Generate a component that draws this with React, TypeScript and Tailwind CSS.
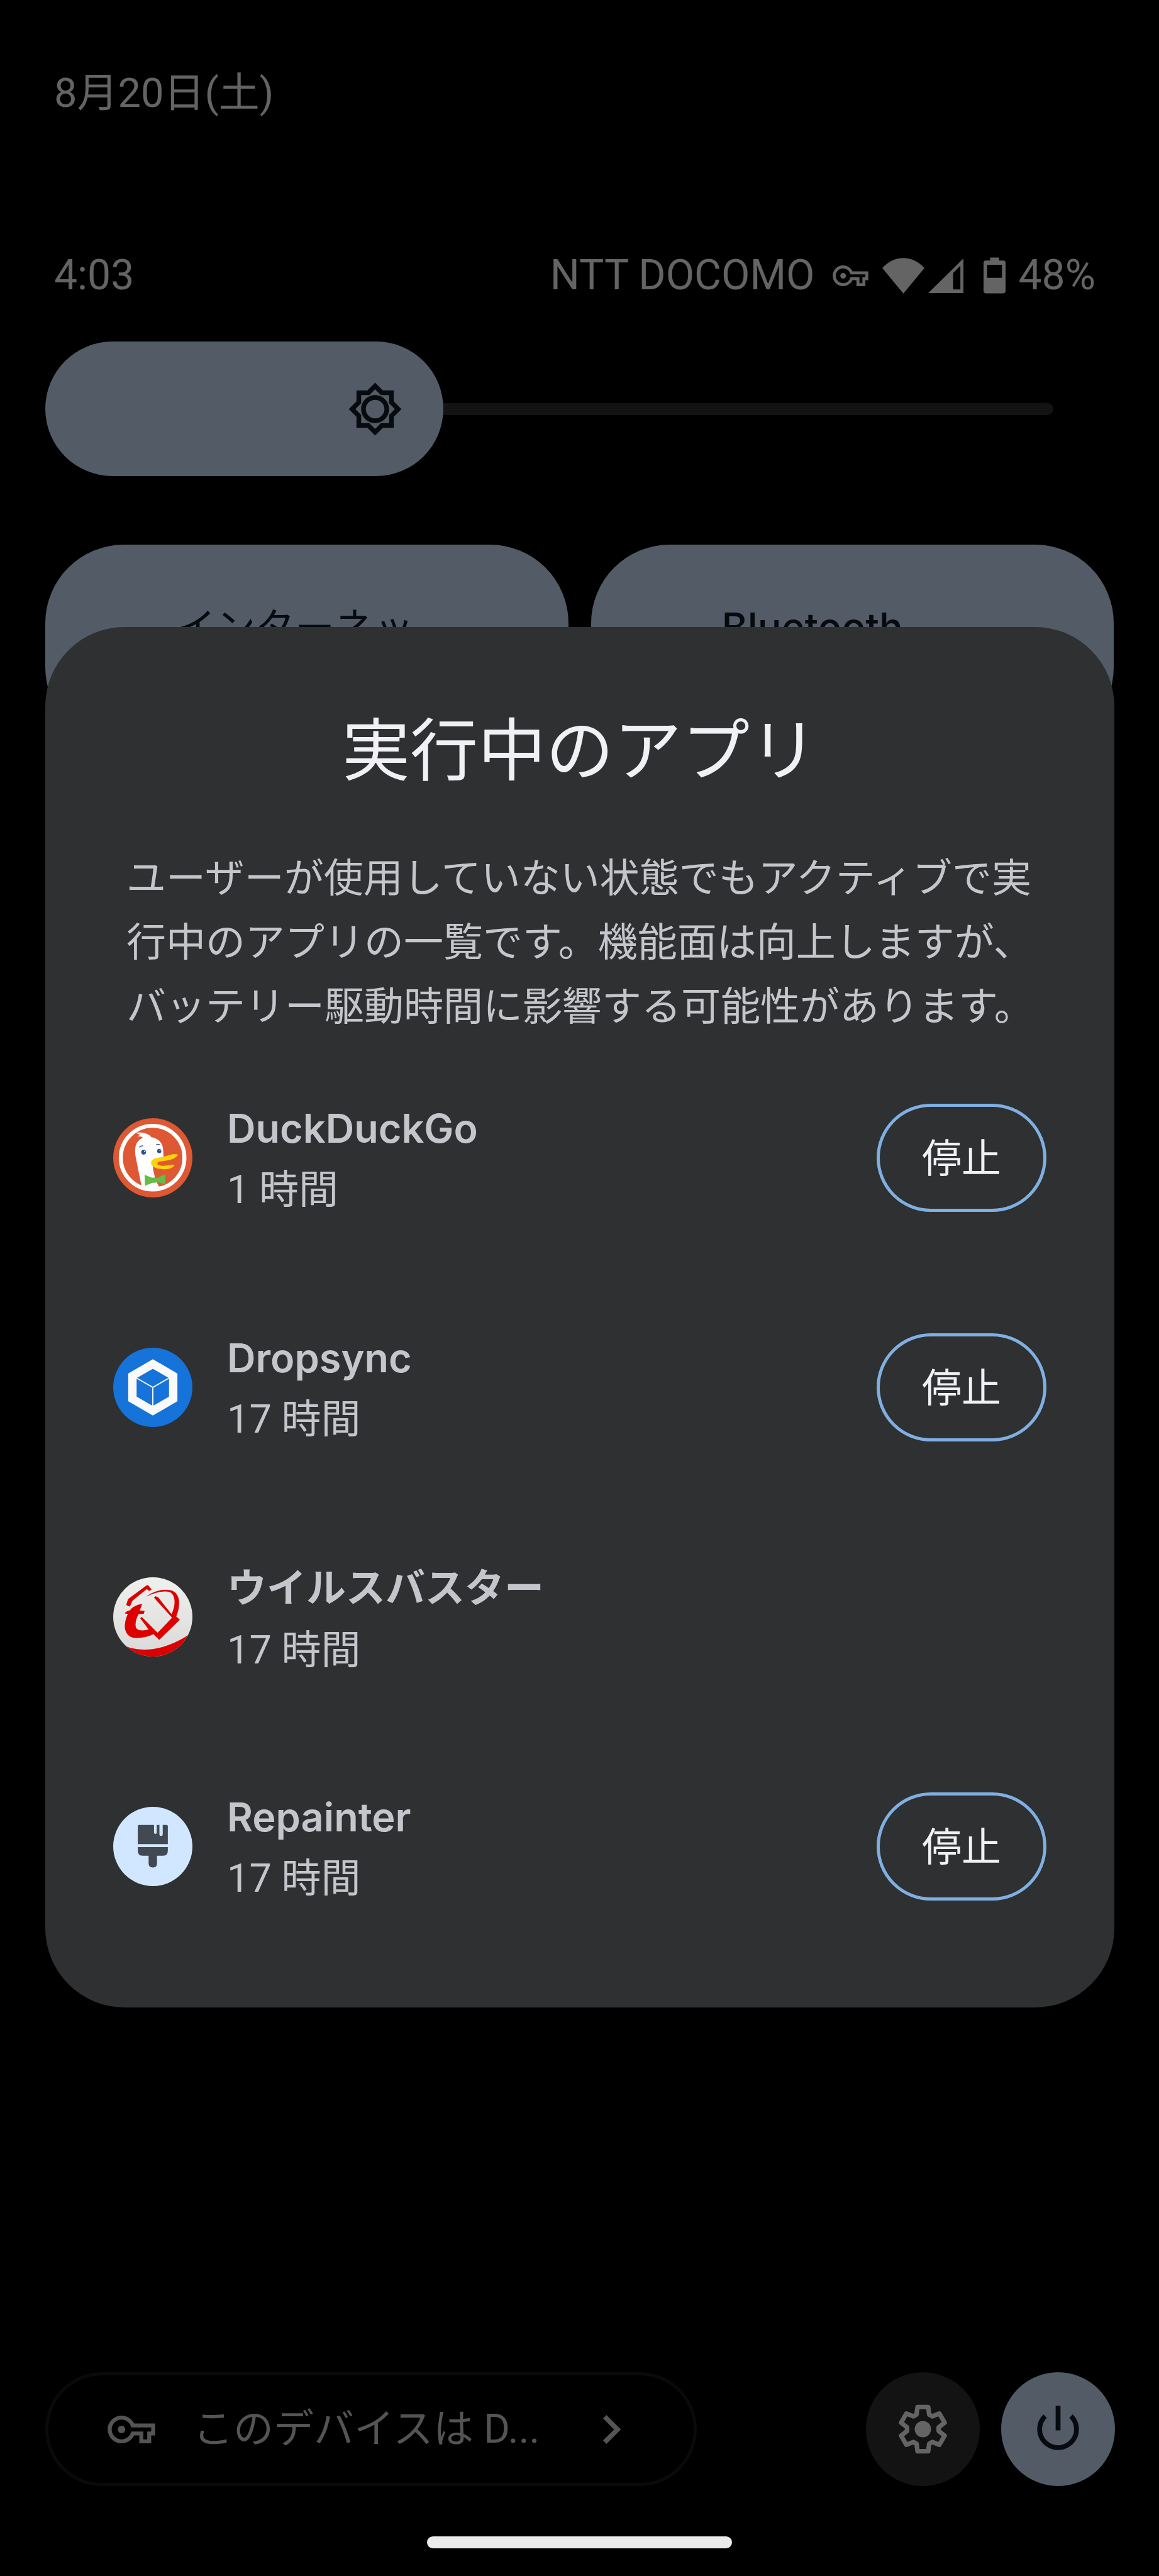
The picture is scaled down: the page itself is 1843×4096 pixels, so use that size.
import { useState } from "react";
import type { ReactNode } from "react";
import { MdChevronRight, MdOutlineBrightnessLow } from "react-icons/md";

function KeyIcon({ className }: { className: string }) {
  return (
    <svg viewBox="0 5 24 14" fill="currentColor" className={className} aria-hidden="true">
      <path d="M22 19h-6v-4h-2.68c-1.14 2.42-3.6 4-6.32 4-3.86 0-7-3.14-7-7s3.14-7 7-7c2.72 0 5.17 1.58 6.32 4H24v6h-2v4zm-4-2h2v-4h2v-2H11.94l-.23-.67C11.01 8.34 9.11 7 7 7c-2.76 0-5 2.24-5 5s2.24 5 5 5c2.11 0 4.01-1.34 4.71-3.33l.23-.67H18v4z" />
      <circle cx="7" cy="12" r="1.9" />
    </svg>
  );
}

function WifiIcon() {
  return (
    <svg viewBox="0 0 70 59" fill="currentColor" className="h-[57px] w-[67px]" aria-hidden="true">
      <path d="M0 16.6 C20 -5.5 50 -5.5 70 16.6 L35 59 Z" />
    </svg>
  );
}

function SignalIcon() {
  return (
    <svg viewBox="0 0 58 57" fill="currentColor" className="h-[55px] w-[56px]" aria-hidden="true">
      <path fillRule="evenodd" d="M58 0 V57 H0 Z M53 12 L41 24 V51 H53 Z" />
    </svg>
  );
}

function BatteryIcon() {
  return (
    <svg viewBox="0 0 37 60" fill="currentColor" className="h-[58px] w-[35px]" aria-hidden="true">
      <path
        fillRule="evenodd"
        d="M11 0 H26 V5 H33 Q37 5 37 9 V56 Q37 60 33 60 H4 Q0 60 0 56 V9 Q0 5 4 5 H11 Z M6 12 V34 H31 V12 Z"
      />
    </svg>
  );
}

const gearPoints = [0, 60, 120, 180, 240, 300]
  .flatMap((base) =>
    [
      [-13.5, 37.5],
      [13.5, 37.5],
      [23.5, 26.2],
      [36.5, 26.2],
    ].map(([offset, radius]) => {
      const angle = ((base + offset) * Math.PI) / 180;
      return `${(radius * Math.sin(angle)).toFixed(2)},${(-radius * Math.cos(angle)).toFixed(2)}`;
    }),
  )
  .join(" ");

function GearIcon() {
  return (
    <svg viewBox="-42 -42 84 84" className="size-[81px]" aria-hidden="true">
      <polygon points={gearPoints} fill="none" stroke="currentColor" strokeWidth="7.5" strokeLinejoin="round" />
      <circle r="13.5" fill="currentColor" />
    </svg>
  );
}

function PowerIcon() {
  return (
    <svg viewBox="0 0 80 80" className="size-[77px]" fill="none" stroke="currentColor" strokeWidth="8" aria-hidden="true">
      <path d="M40 1.5 V42" />
      <path d="M18.6 18.4 A30.5 30.5 0 1 0 61.4 18.4" />
    </svg>
  );
}

function DuckIcon() {
  return (
    <svg viewBox="51 38 396 396" className="size-[126px]" aria-hidden="true">
      <circle cx="249" cy="236" r="198" fill="#de5833" />
      <circle cx="248" cy="235" r="159" fill="none" stroke="#fff" strokeWidth="20" />
      <path
        fill="#fff"
        d="M193 380 L162 225 C156 180 166 148 200 136 C192 129 180 127 170 129 L186 121 C180 118 172 115 165 111 C195 106 228 114 242 133 C284 140 301 168 301 202 L303 240 L248 262 L250 292 L262 345 L280 380 L296 376 L300 392 L248 402 L200 392 Z"
      />
      <path
        fill="#fdd20a"
        d="M374 219 C352 212 322 226 300 231 C272 236 242 238 240 260 C241 284 272 291 300 293 C326 294 354 290 356 270 C336 270 300 284 273 269 C268 254 290 254 304 252 C336 249 370 238 374 219 Z"
      />
      <path fill="#65bc46" d="M208 321 L246 336 Q258 332 270 336 L312 318 V368 L272 358 Q258 362 247 361 L210 376 Z" />
      <circle cx="203" cy="208" r="12" fill="#2d4f8e" />
      <circle cx="208" cy="204" r="3.5" fill="#fff" />
      <circle cx="281" cy="202" r="10.5" fill="#2d4f8e" />
      <circle cx="285" cy="198" r="3" fill="#fff" />
      <path d="M181 184 Q188 174 201 177" fill="none" stroke="#2d4f8e" strokeWidth="4" />
      <path d="M265 172 Q275 166 286 171" fill="none" stroke="#2d4f8e" strokeWidth="4" />
    </svg>
  );
}

function BoxIcon() {
  return (
    <svg viewBox="-66 -66 132 132" className="size-[126px]" aria-hidden="true">
      <circle r="66" fill="#1673d9" />
      <polygon points="0,-47 41,-23 41,23 0,47 -41,23 -41,-23" fill="#fafafa" />
      <polygon points="0,-31 27,-15.5 27,15.5 0,31 -27,15.5 -27,-15.5" fill="#1673d9" />
      <path d="M-27 -15.5 L0 0 L27 -15.5 M0 0 V31" fill="none" stroke="#fafafa" strokeWidth="2" />
    </svg>
  );
}

function ShieldIcon() {
  return (
    <svg viewBox="51 38 396 396" className="size-[126px]" aria-hidden="true">
      <defs>
        <linearGradient id="shield-bg" x1="0" y1="0" x2="0" y2="1">
          <stop offset="0" stopColor="#f0f0ee" />
          <stop offset="1" stopColor="#d9dad8" />
        </linearGradient>
        <clipPath id="shield-clip">
          <circle cx="249" cy="236" r="198" />
        </clipPath>
      </defs>
      <circle cx="249" cy="236" r="198" fill="url(#shield-bg)" />
      <g fill="#dc0000">
        <path clipPath="url(#shield-clip)" d="M108 380 C190 416 310 405 436 320 V440 H108 Z" />
        <path d="M116 176 L125 147 L217 79 L226 77 L243 99 L231 106 L219 97 L148 154 L134 185 Z" />
        <path d="M196 171 L184 204 L208 206 L204 220 L178 222 C165 245 158 275 166 291 C174 306 205 306 228 298 L186 243 L194 236 L273 315 L345 240 L255 140 L262 132 L276 138 L342 222 C362 185 368 125 330 110 C300 104 250 115 216 135 C250 105 322 88 356 110 C390 135 384 190 366 234 L384 250 L281 351 L252 322 C230 336 180 345 150 340 C118 332 105 300 110 270 C112 250 118 235 124 221 L109 219 C112 210 125 205 135 203 C145 188 165 176 196 171 Z" />
      </g>
    </svg>
  );
}

function BrushIcon() {
  return (
    <svg viewBox="-66 -66 132 132" className="size-[126px]" aria-hidden="true">
      <circle r="66" fill="#d1e6ff" />
      <path
        fill="#424953"
        d="M-23 -36 H2 V-23 Q2 -21 4.500 -21 Q6.500 -21 6.500 -23 V-36 H11 V-20 Q11 -17.500 14 -17.500 Q16.500 -17.500 16.500 -20 V-36 H23 Q25 -36 25 -34 V-4 H-25 V-34 Q-25 -36 -23 -36 Z"
      />
      <path fill="#424953" d="M-25 1 H25 V7 Q25 15.500 17 15.500 H7 V28 Q7 35 0 35 Q-7 35 -7 28 V15.500 H-17 Q-25 15.500 -25 7 Z" />
    </svg>
  );
}

type RunningApp = { name: string; leading: string; time: string; icon: ReactNode; stoppable: boolean };

const apps: RunningApp[] = [
  { name: "DuckDuckGo", leading: "leading-[98px]", time: "1 時間", icon: <DuckIcon />, stoppable: true },
  { name: "Dropsync", leading: "leading-[98px]", time: "17 時間", icon: <BoxIcon />, stoppable: true },
  { name: "ウイルスバスター", leading: "leading-[102px]", time: "17 時間", icon: <ShieldIcon />, stoppable: false },
  { name: "Repainter", leading: "leading-[98px]", time: "17 時間", icon: <BrushIcon />, stoppable: true },
];

function AppRow({ app }: { app: RunningApp }) {
  return (
    <li className="flex h-[365px] items-center">
      {app.icon}
      <div className="ml-[55px] flex-1 pt-[4px]">
        <h2 className={`font-['Inter','Noto_Sans_CJK_JP',sans-serif] text-[63px] font-semibold ${app.leading}`}>
          {app.name}
        </h2>
        <p className="text-[63px] leading-[98px]">{app.time}</p>
      </div>
      {app.stoppable && (
        <button
          type="button"
          aria-label={`${app.name} を停止`}
          className="h-[172px] w-[270px] rounded-full border-[5px] border-[#80afe2] pt-[4px] text-[63px] text-[#f1f0f4]"
        >
          停止
        </button>
      )}
    </li>
  );
}

function BrightnessSlider() {
  const [level, setLevel] = useState(395);
  return (
    <div className="relative mr-[96px] flex h-[214px] items-center">
      <span className="absolute inset-x-0 h-[19px] rounded-full bg-[#131313]" />
      <span
        className="relative flex h-full min-w-[214px] items-center justify-end rounded-full bg-[#535b66] pr-[64px] text-[#070b0f]"
        style={{ width: `${level / 10}%` }}
      >
        <MdOutlineBrightnessLow className="size-[89px]" aria-hidden="true" />
      </span>
      <input
        type="range"
        aria-label="画面の明るさ"
        min={0}
        max={1000}
        value={level}
        onChange={(event) => setLevel(Number(event.target.value))}
        className="absolute inset-0 h-full w-full opacity-0"
      />
    </div>
  );
}

function Tile({ label, weight }: { label: string; weight: string }) {
  return (
    <button
      type="button"
      className={`flex h-[320px] flex-1 rounded-[125px] bg-[#535b66] pt-[86px] pl-[208px] font-['Inter','Noto_Sans_CJK_JP',sans-serif] text-[63px] leading-[90px] text-[#070b0f] ${weight}`}
    >
      {label}
    </button>
  );
}

export default function App() {
  return (
    <div
      lang="ja"
      className="relative flex min-h-screen flex-col overflow-hidden bg-black font-['Roboto','Noto_Sans_CJK_JP',sans-serif] text-[66px] leading-[90px] text-[#646464]"
    >
      <header className="pt-[103px] pr-[101px] pl-[86px]">
        <p className="text-[65px] leading-[90px]">8月20日(土)</p>
        <div className="mt-[200px] flex items-center">
          <time>4:03</time>
          <span className="ml-auto">NTT DOCOMO</span>
          <KeyIcon className="ml-[29px] h-[33px] w-[57px]" />
          <span className="ml-[22px] flex items-center gap-[6px]">
            <WifiIcon />
            <SignalIcon />
          </span>
          <span className="ml-[32px] flex items-center gap-[20px]">
            <BatteryIcon />
            48%
          </span>
        </div>
      </header>

      <main className="mx-[72px] mt-[60px]">
        <BrightnessSlider />
        <div className="mt-[109px] flex gap-[36px]">
          <Tile label="インターネッ…" weight="font-normal" />
          <Tile label="Bluetooth" weight="font-medium" />
        </div>
      </main>

      <footer className="mt-auto flex flex-col items-center px-[72px] pb-[44px]">
        <div className="flex w-full items-center justify-between">
          <button
            type="button"
            className="flex h-[181px] w-[1036px] items-center rounded-full border-[5px] border-[#0a0a0a] pr-[85px] pl-[94px] text-left text-[64px] text-[#535454]"
          >
            <KeyIcon className="h-[44px] w-[76px]" />
            <span className="ml-[60px] flex-1">このデバイスは D...</span>
            <MdChevronRight className="size-[92px]" aria-hidden="true" />
          </button>
          <div className="-mr-[2px] flex gap-[34px]">
            <button
              type="button"
              aria-label="設定"
              className="flex size-[181px] items-center justify-center rounded-full bg-[#131313]"
            >
              <GearIcon />
            </button>
            <button
              type="button"
              aria-label="電源"
              className="flex size-[181px] items-center justify-center rounded-full bg-[#535b66] text-[#070b0f]"
            >
              <PowerIcon />
            </button>
          </div>
        </div>
        <div className="mt-[80px] h-[19px] w-[485px] rounded-full bg-[#ebebeb]" />
      </footer>

      <section
        role="dialog"
        aria-labelledby="running-title"
        className="absolute top-[997px] right-[71px] left-[72px] rounded-[126px] bg-[#2e3031] pt-[133px] pb-[74px] text-[#c4c6cb]"
      >
        <h1 id="running-title" className="text-center text-[108px] leading-[130px] text-[#f1f0f4]">
          実行中のアプリ
        </h1>
        <p className="mt-[86px] pr-[120px] pl-[129px] text-[63px] leading-[102px]">
          ユーザーが使用していない状態でもアクティブで実行中のアプリの一覧です。機能面は向上しますが、バッテリー駆動時間に影響する可能性があります。
        </p>
        <ul className="mt-[6px] px-[108px]">
          {apps.map((app) => (
            <AppRow key={app.name} app={app} />
          ))}
        </ul>
      </section>
    </div>
  );
}
